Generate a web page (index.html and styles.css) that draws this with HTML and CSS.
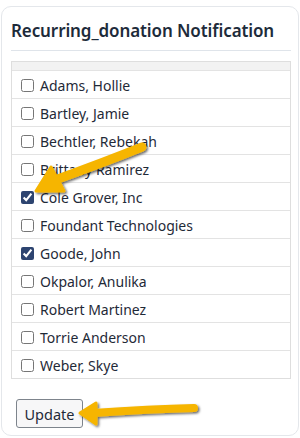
FILE: index.html
```html
<!DOCTYPE html>
<html>
<head>
<meta charset="utf-8">
<link rel="stylesheet" href="styles.css">
</head>
<body>
<div class="card">
  <h2 class="title">Recurring_donation Notification</h2>
  <hr class="rule">
  <div class="list">
    <div class="list-head"></div>
    <label class="row"><input type="checkbox"> Adams, Hollie</label>
    <label class="row"><input type="checkbox"> Bartley, Jamie</label>
    <label class="row"><input type="checkbox"> Bechtler, Rebekah</label>
    <label class="row"><input type="checkbox"> Brittany Ramirez</label>
    <label class="row"><input type="checkbox" checked> Cole Grover, Inc</label>
    <label class="row"><input type="checkbox"> Foundant Technologies</label>
    <label class="row"><input type="checkbox" checked> Goode, John</label>
    <label class="row"><input type="checkbox"> Okpalor, Anulika</label>
    <label class="row"><input type="checkbox"> Robert Martinez</label>
    <label class="row"><input type="checkbox"> Torrie Anderson</label>
    <label class="row"><input type="checkbox"> Weber, Skye</label>
  </div>
  <button class="btn">Update</button>
</div>
<svg class="arrows" width="300" height="438" viewBox="0 0 300 438">
  <defs>
    <filter id="sh" x="-20%" y="-20%" width="140%" height="140%">
      <feDropShadow dx="1.5" dy="1.5" stdDeviation="1" flood-color="#000" flood-opacity="0.6"/>
    </filter>
  </defs>
  <g filter="url(#sh)" fill="#f6b500" stroke="#f6b500" stroke-linecap="round" stroke-linejoin="round">
    <path d="M142 147 Q105 162 55 180" fill="none" stroke-width="9"/>
    <path d="M36 191 L51 167 L64 191 Z" stroke-width="3"/>
    <path d="M194 408 Q150 409 93 413" fill="none" stroke-width="8"/>
    <path d="M80 413 L96 403 L96 424 Z" stroke-width="3"/>
  </g>
</svg>
</body>
</html>
```
FILE: styles.css
```css
html, body {
  margin: 0;
  padding: 0;
  background: #ffffff;
}
body {
  position: relative;
  width: 300px;
  height: 438px;
  overflow: hidden;
  font-family: "Noto Sans", "DejaVu Sans", sans-serif;
  color: #212529;
}
.card {
  margin: 6px 1px 0 1px;
  border: 1px solid #e4e7eb;
  border-radius: 10px;
  padding: 11px 7px 8px 9px;
  box-sizing: border-box;
  height: 430px;
}
.title {
  margin: 0;
  font-size: 17px;
  font-weight: 600;
  line-height: 26px;
  color: #1d2b3a;
  letter-spacing: -0.1px;
}
.rule {
  margin: 6px 0 10px 0;
  border: 0;
  border-top: 1px solid #dfe4ea;
}
.list {
  width: 280px;
  box-sizing: border-box;
  border: 1px solid #dedede;
}
.list-head {
  height: 8px;
  background: #f2f2f2;
}
.row {
  display: flex;
  align-items: center;
  gap: 6px;
  box-sizing: border-box;
  height: 28px;
  padding: 1px 0 0 9px;
  border-top: 1px solid #e3e3e3;
  font-size: 14px;
  color: #1f2a38;
}
.row input {
  width: 13px;
  height: 13px;
  margin: 0;
  accent-color: #2d4470;
}
.btn {
  display: block;
  margin: 20px 0 0 5px;
  width: 67px;
  height: 29px;
  padding: 0;
  border: 1px solid #7d848c;
  border-radius: 3px;
  background: #f7f7f8;
  font-family: "Noto Sans", "DejaVu Sans", sans-serif;
  font-size: 14.5px;
  color: #1f2a38;
}
.arrows {
  position: absolute;
  left: 0;
  top: 0;
  pointer-events: none;
}
```
